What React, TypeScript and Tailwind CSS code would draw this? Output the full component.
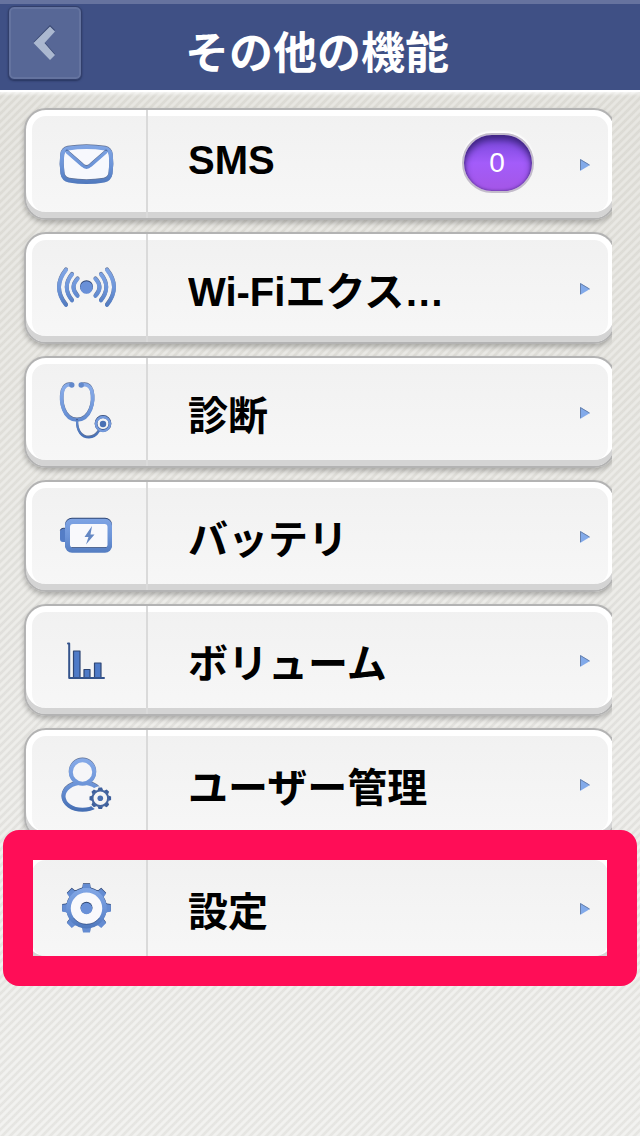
import type { ReactNode } from "react";

const BLUE = "url(#icon-blue)";
const EDGE = "#2f4674";

function IconDefs() {
  return (
    <svg className="absolute size-0" aria-hidden="true">
      <defs>
        <linearGradient id="icon-blue" gradientUnits="userSpaceOnUse" x1="0" y1="8" x2="0" y2="58">
          <stop offset="0" stopColor="#86aae8" />
          <stop offset="0.5" stopColor="#6c94d8" />
          <stop offset="1" stopColor="#466fb4" />
        </linearGradient>
      </defs>
    </svg>
  );
}

/* Every stroke is drawn twice: a dark copy one unit higher gives the bevelled top edge. */
function Icon({ children }: { children: ReactNode }) {
  return (
    <svg viewBox="0 0 64 64" className="size-16" fill="none" strokeLinecap="round" strokeLinejoin="round" aria-hidden="true">
      {children}
    </svg>
  );
}

function Bevel({ d, width }: { d: string; width: number }) {
  return (
    <>
      <path d={d} stroke={EDGE} strokeWidth={width} transform="translate(0 -0.8)" opacity="0.75" />
      <path d={d} stroke={BLUE} strokeWidth={width} />
    </>
  );
}

function MailIcon() {
  return (
    <Icon>
      <path d="M14 16h37l5 8v18l-6 7H14l-6-7V24z" fill="#f7f8fd" />
      <Bevel width={4} d="M14 16.500Q32.500 13.500 51 16.500Q56 17.500 56.800 23Q58 32 56.500 42Q55.500 47.500 50 48.500Q32.500 51.500 15 48.500Q9.500 47.500 8.500 42Q7 32 8.200 23Q9 17.500 14 16.500Z" />
      <Bevel width={3} d="M13 20L28.500 33.500Q32.500 37.500 36.500 33.500L52 20" />
    </Icon>
  );
}

function WifiIcon() {
  return (
    <Icon>
      <Bevel width={3.8} d="M12 14Q-2 31.500 12 49M18 18.500Q7.500 31.500 18 44.500M23.500 23Q15.500 31.500 23.500 40M53 14Q67 31.500 53 49M47 18.500Q57.500 31.500 47 44.500M41.500 23Q49.500 31.500 41.500 40" />
      <circle cx="32.500" cy="30.700" r="6.500" fill={EDGE} />
      <circle cx="32.500" cy="31.500" r="6.300" fill="#6990d8" />
    </Icon>
  );
}

function StethoscopeIcon() {
  return (
    <Icon>
      <Bevel width={3.6} d="M17.500 5Q11 3.500 8.500 11C6 22 9.500 40 23 40C36.500 40 40.500 22 37.800 11Q35.500 3.500 28 5" />
      <circle cx="17.800" cy="5" r="2.700" fill="#6289cc" />
      <circle cx="27.200" cy="5" r="2.700" fill="#6289cc" />
      <Bevel width={2.2} d="M23 41C23 52 28 57.500 35 57.500Q41 57.500 45 51" />
      <circle cx="49" cy="43.500" r="7" stroke={EDGE} strokeWidth="2.800" />
      <circle cx="49" cy="44" r="7" stroke="#7399dc" strokeWidth="2.400" />
      <circle cx="49" cy="44" r="3.200" fill="#4a71b4" />
    </Icon>
  );
}

function BatteryIcon() {
  return (
    <Icon>
      <path d="M11.500 24.500H9Q6 24.500 6 27.500V35Q6 38 9 38H11.500Z" fill="#547dc6" />
      <path d="M6.500 26Q7 24.300 9 24.300H11.500" stroke={EDGE} />
      <rect x="11" y="13.700" width="47" height="34" rx="7" fill={EDGE} />
      <rect x="11" y="14.700" width="47" height="34" rx="7" fill={BLUE} />
      <rect x="16" y="20" width="37.500" height="23.500" rx="3" fill="#f9f9fc" />
      <path d="M18 43.500H52" stroke={EDGE} opacity="0.7" />
      <path d="M38 22L30.500 33H34.500L32 40.500L40.500 30.500H36.500Z" fill="#6588c4" />
    </Icon>
  );
}

function VolumeIcon() {
  return (
    <Icon>
      <path d="M19.500 49.500V23H26V49.500M30 49.500V41.500H36V49.500M40.500 49.500V35H47V49.500" fill="#4f7bc8" stroke={EDGE} strokeWidth="1.200" />
      <path d="M14 15.500H15.200V50H50" stroke="#35548c" strokeWidth="2" />
    </Icon>
  );
}

function Teeth({ cx, cy, count, path, fill }: { cx: number; cy: number; count: number; path: string; fill: string }) {
  return (
    <g transform={`translate(${cx} ${cy})`} fill={fill}>
      {Array.from({ length: count }, (_, i) => (
        <path key={i} d={path} transform={`rotate(${(i * 360) / count})`} />
      ))}
    </g>
  );
}

function UserIcon() {
  return (
    <Icon>
      <ellipse cx="28.500" cy="43.500" rx="19" ry="13.500" stroke={EDGE} strokeWidth="4" opacity="0.75" />
      <ellipse cx="28.500" cy="44.300" rx="19" ry="13.500" stroke={BLUE} strokeWidth="4" fill="#f6f6f8" />
      <circle cx="28.500" cy="19.300" r="11.700" stroke={EDGE} strokeWidth="4" opacity="0.75" />
      <circle cx="28.500" cy="20" r="11.700" stroke={BLUE} strokeWidth="4" fill="#f6f6f8" />
      <circle cx="46.300" cy="46.300" r="12" fill="#f5f5f5" />
      <Teeth cx={46.300} cy={46.300} count={8} path="M-2.800 -8L-1.700 -10.800H1.700L2.800 -8Z" fill="#3d5f9c" />
      <circle cx="46.300" cy="46.300" r="7.800" stroke="#44659f" strokeWidth="2" />
      <circle cx="46.300" cy="46.300" r="2.800" fill="#496fb0" />
    </Icon>
  );
}

function SettingsIcon() {
  const tooth = "M-6 -18L-4 -20.500L-3.500 -24.300H3.500L4 -20.500L6 -18Z";
  return (
    <Icon>
      <Teeth cx={32.500} cy={31.500} count={8} path={tooth} fill={EDGE} />
      <circle cx="32.500" cy="31.500" r="18" stroke={EDGE} strokeWidth="4.500" />
      <Teeth cx={32.500} cy={32.300} count={8} path={tooth} fill="#648cd2" />
      <circle cx="32.500" cy="32.300" r="18" stroke={BLUE} strokeWidth="4.500" fill="#f9f9fc" />
      <path d="M20 42.500A16 16 0 0 0 45 42.500" stroke={EDGE} opacity="0.6" />
      <circle cx="32.500" cy="31.700" r="6" fill={EDGE} />
      <circle cx="32.500" cy="32.500" r="5.800" fill="#6990d8" />
    </Icon>
  );
}

type Item = { label: string; icon: ReactNode; count?: number; highlighted?: boolean };

const items: Item[] = [
  { label: "SMS", icon: <MailIcon />, count: 0 },
  { label: "Wi-Fiエクス…", icon: <WifiIcon /> },
  { label: "診断", icon: <StethoscopeIcon /> },
  { label: "バッテリ", icon: <BatteryIcon /> },
  { label: "ボリューム", icon: <VolumeIcon /> },
  { label: "ユーザー管理", icon: <UserIcon /> },
  { label: "設定", icon: <SettingsIcon />, highlighted: true },
];

function MenuRow({ label, icon, count, highlighted }: Item) {
  const counted = count !== undefined;
  return (
    <li className="relative">
      <div className="mr-7 overflow-x-clip pl-6">
        <div className="-mr-1">
          <button
            type="button"
            className="flex h-28 w-full items-stretch rounded-[22px] border-2 border-[#b3b3b3] bg-linear-to-b from-[#f1f1f1] to-[#f7f7f7] text-left shadow-[inset_0_-6px_0_#d4d4d4,inset_0_0_0_6px_#fff,0_3px_5px_rgba(0,0,0,0.25)]"
          >
            <span className="flex w-[122px] shrink-0 items-center justify-center border-r-2 border-[#dadada]">{icon}</span>
            <span className="flex min-w-0 flex-1 items-center pr-6 pl-10">
              <span className={`min-w-0 flex-1 truncate text-[40px] leading-[60px] font-bold text-black ${counted ? "pb-2" : "pt-2"}`}>
                {label}
              </span>
              {counted && (
                <span className="mr-11 mb-0.5 flex h-[60px] w-[72px] items-center justify-center rounded-[30px] border-2 border-[#c3bccb] bg-linear-to-b from-[#7545d8] via-[#a35cfa] to-[#a456e6] pr-0.5 text-[28px] text-white shadow-[inset_0_5px_7px_#3e2580,inset_0_0_3px_#50308c,0_-2px_2px_#fff]">
                  {count}
                </span>
              )}
              <svg viewBox="0 0 12 14" className="h-3.5 w-3 shrink-0" aria-hidden="true">
                <path d="M2 2L12 8L2 14Z" fill="#82aaea" />
                <path d="M2.500 13V2.600L11.500 8" fill="none" stroke="#6680ac" />
              </svg>
            </span>
          </button>
        </div>
      </div>
      {highlighted && (
        <div className="pointer-events-none absolute -inset-y-[22px] right-[3px] left-[3px] rounded-2xl border-[30px] border-[#ff0d57]" />
      )}
    </li>
  );
}

export default function App() {
  return (
    <div className="relative min-h-screen bg-linear-to-b from-[#e6e5e0] to-[#f2f2f0] font-['Liberation_Sans','Noto_Sans_CJK_JP',sans-serif]">
      <IconDefs />
      <div className="min-h-screen bg-[linear-gradient(135deg,rgba(90,85,70,0.08)_20%,transparent_30%,transparent_45%,rgba(90,85,70,0.08)_55%,rgba(90,85,70,0.08)_70%,transparent_80%,transparent_95%,rgba(90,85,70,0.08)_100%)] bg-size-[8px_8px]">
        <header className="grid h-[92px] grid-cols-[1fr_auto_1fr] items-start border-t-4 border-b-2 border-t-[#66739f] border-b-white bg-[#3f5085] px-2 shadow-[0_2px_3px_rgba(255,255,255,0.7)]">
          <button
            type="button"
            aria-label="戻る"
            className="mt-0.5 flex size-[74px] items-center justify-center rounded-md border border-[#323f6b] bg-[#576796] shadow-[inset_0_0_0_2px_#64739f,0_1px_2px_#27345e]"
          >
            <svg viewBox="0 0 24 36" className="h-9 w-6" aria-hidden="true">
              <path d="M17 0L0.500 17L17 34L22 29L11.500 17L22 5Z" fill="#303e68" opacity="0.8" />
              <path d="M17 1.500L0.500 18L17 35L22 30L11.500 18L22 6.500Z" fill="#abb8d0" />
            </svg>
          </button>
          <h1 className="pt-5 pr-1.5 text-[44px] leading-[60px] font-bold text-white">その他の機能</h1>
        </header>
        <main className="pt-4 pb-8">
          <ul className="flex flex-col gap-3">
            {items.map((item) => (
              <MenuRow key={item.label} {...item} />
            ))}
          </ul>
        </main>
      </div>
    </div>
  );
}
